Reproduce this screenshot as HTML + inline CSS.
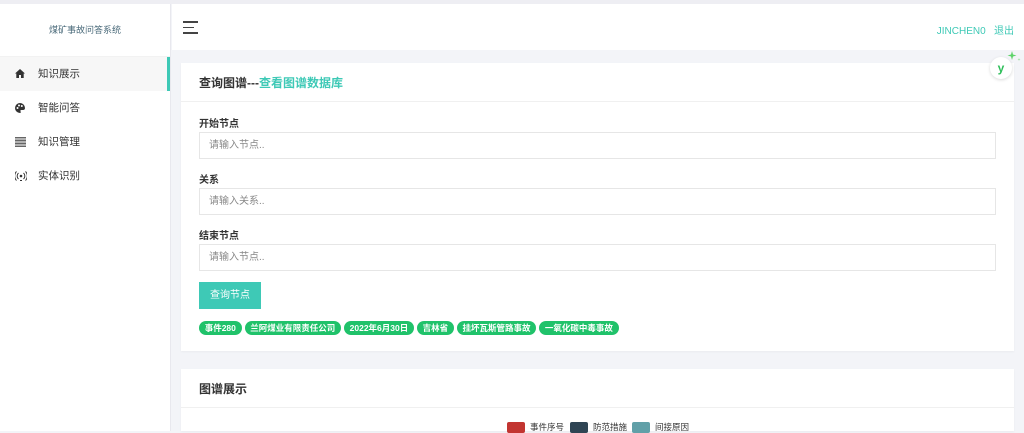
<!DOCTYPE html>
<html><head><meta charset="utf-8"><style>
*{box-sizing:border-box;margin:0;padding:0}
body{width:1024px;height:431px;overflow:hidden;background:#f3f4f8;font-family:"Liberation Sans","Noto Sans CJK SC",sans-serif;position:relative}
.top{position:absolute;left:0;top:0;width:1024px;height:4px;background:#eeeef3}
.side{position:absolute;left:0;top:4px;width:171px;height:427px;background:#fff;border-right:1px solid #e8e8ee}
.logo{height:53px;text-align:center;line-height:52px;font-size:9px;color:#4a6a7a;border-bottom:1px solid #f2f2f2}
.menu div{height:34px;line-height:34px;font-size:10.5px;color:#333;padding-left:38px;position:relative}
.menu div.act{background:#f7f7f7;border-right:3px solid #3ec9b6}
.menu svg{position:absolute;left:15px;top:12px}
.hdr{position:absolute;left:172px;top:4px;width:852px;height:46px;background:#fff}
.burger{position:absolute;left:11px;top:17px;width:15px}
.burger i{display:block;height:1.5px;background:#444;margin-bottom:4px}
.burger i:nth-child(2){width:11px}
.user{position:absolute;right:10px;top:18px;font-size:10px;color:#3ec9b6}
.card{position:absolute;left:181px;width:833px;background:#fff;box-shadow:0 1px 2px rgba(0,0,0,.04)}
.ch{height:39px;border-bottom:1px solid #f0f0f0;padding-left:18px;line-height:40px;font-size:12px;font-weight:bold;color:#333}
.ch span{color:#3ec9b6}
.lbl{position:absolute;left:18px;font-size:10px;font-weight:bold;color:#333}
.inp{position:absolute;left:18px;width:797px;height:27px;border:1px solid #e6e6e6;font-size:10px;color:#888;padding-left:9px;line-height:25px}
.btn{position:absolute;left:18px;top:219px;width:62px;height:27px;background:#3ec9b6;color:#fff;font-size:10px;text-align:center;line-height:27px}
.tags{position:absolute;left:18px;top:258px;display:flex;gap:3px}
.tags span{background:#20c26a;color:#fff;font-size:8.5px;font-weight:bold;padding:0 5.7px;height:14px;line-height:14px;border-radius:7px}
.leg{position:absolute;top:421px;font-size:8.5px;color:#333}
.leg i{display:inline-block;width:18px;height:11px;border-radius:2px;vertical-align:middle;margin-right:5px}
.fab{position:absolute;left:990px;top:57px;width:22px;height:22px;border-radius:50%;background:#fff;box-shadow:0 1px 3px rgba(0,0,0,.15);color:#2fbf5a;font-weight:bold;font-size:12px;text-align:center;line-height:22px}
</style></head><body>
<div class="top"></div>
<div class="side">
<div class="logo">煤矿事故问答系统</div>
<div class="menu">
<div class="act"><svg width="10" height="9" viewBox="0 0 10 9"><path d="M5 0L0 4.5h1.3V9h2.7V6h2v3h2.7V4.5H10z" fill="#333"/></svg>知识展示</div>
<div><svg width="10" height="10" viewBox="0 0 10 10"><path d="M5 0a5 5 0 100 10c1 0 1-1 .5-1.6S5.5 7 6.5 7H8a2 2 0 002-2A5 5 0 005 0z" fill="#333"/><circle cx="2.5" cy="5" r="1" fill="#fff"/><circle cx="4" cy="2.5" r="1" fill="#fff"/><circle cx="6.8" cy="3" r="1" fill="#fff"/></svg>智能问答</div>
<div><svg width="11" height="10" viewBox="0 0 11 10"><path d="M0 .5h11M0 3.5h11M0 6.5h11M0 9.5h11M0 2h11M0 5h11M0 8h11" stroke="#333" stroke-width=".8"/></svg>知识管理</div>
<div><svg width="12" height="10" viewBox="0 0 12 10"><circle cx="6" cy="5" r="1.3" fill="#333"/><path d="M3.5 2a4 4 0 000 6M8.5 2a4 4 0 010 6M1.5 0.5a6.5 6.5 0 000 9M10.5 .5a6.5 6.5 0 010 9M5 9.5h2" stroke="#333" fill="none" stroke-width="1"/></svg>实体识别</div>
</div></div>
<div class="hdr"><div class="burger"><i></i><i></i><i></i></div><div class="user">JINCHEN0 &nbsp; 退出</div></div>
<div class="card" style="top:63px;height:288px">
<div class="ch">查询图谱---<span>查看图谱数据库</span></div>
<div class="lbl" style="top:52px">开始节点</div>
<div class="inp" style="top:69px">请输入节点..</div>
<div class="lbl" style="top:108px">关系</div>
<div class="inp" style="top:125px">请输入关系..</div>
<div class="lbl" style="top:164px">结束节点</div>
<div class="inp" style="top:181px">请输入节点..</div>
<div class="btn">查询节点</div>
<div class="tags"><span>事件280</span><span>兰阿煤业有限责任公司</span><span>2022年6月30日</span><span>吉林省</span><span>挂坏瓦斯管路事故</span><span>一氧化碳中毒事故</span></div>
</div>
<div class="card" style="top:369px;height:62px"><div class="ch">图谱展示</div></div>
<div class="leg" style="left:507px"><i style="background:#c23531"></i>事件序号</div>
<div class="leg" style="left:570px"><i style="background:#2f4554"></i>防范措施</div>
<div class="leg" style="left:632px"><i style="background:#61a0a8"></i>间接原因</div>
<div class="fab">y</div>
<svg style="position:absolute;left:1007px;top:50px" width="14" height="14"><path d="M5 1l1 3.5L9.5 5.5 6 6.5 5 10 4 6.5 .5 5.5 4 4.5z" fill="#5ed36a"/><path d="M12 8l.4 1.1 1.1.4-1.1.4L12 11l-.4-1.1-1.1-.4 1.1-.4z" fill="#9be3a2"/></svg>
</body></html>
